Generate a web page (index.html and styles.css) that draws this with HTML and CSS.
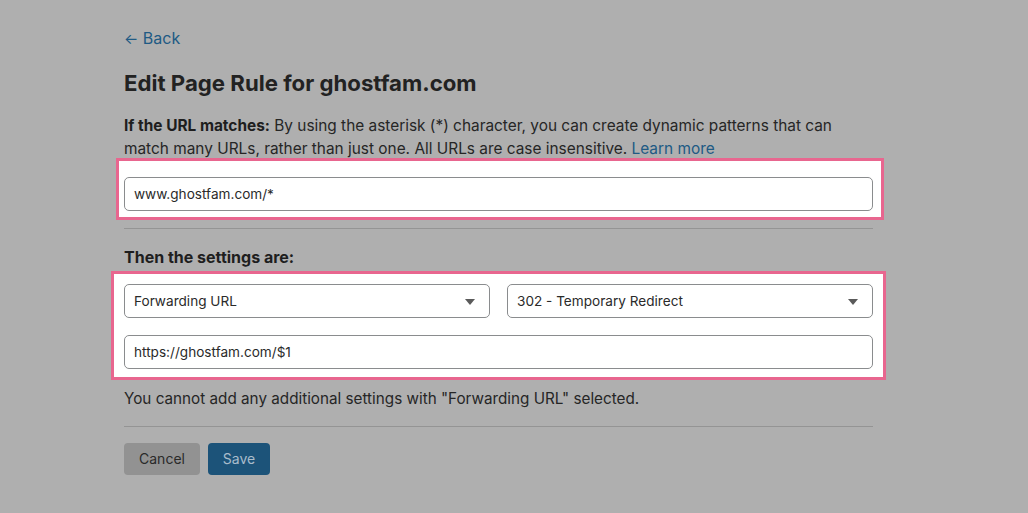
FILE: index.html
```html
<!DOCTYPE html>
<html>
<head>
<meta charset="utf-8">
<link rel="stylesheet" href="styles.css">
</head>
<body>
<main class="page">
  <a class="back" href="#"><span class="arrow">←</span> Back</a>
  <h1 class="title">Edit Page Rule for ghostfam.com</h1>
  <p class="intro"><strong>If the URL matches:</strong> By using the asterisk (*) character, you can create dynamic patterns that can match many URLs, rather than just one. All URLs are case insensitive. <a class="link" href="#">Learn more</a></p>
  <div class="hl hl-url">
    <div class="field">www.ghostfam.com/*</div>
  </div>
  <hr class="divider">
  <h2 class="subtitle">Then the settings are:</h2>
  <div class="hl hl-settings">
    <div class="row">
      <div class="field select">Forwarding URL<span class="caret"></span></div>
      <div class="field select">302 - Temporary Redirect<span class="caret"></span></div>
    </div>
    <div class="field">https://ghostfam.com/$1</div>
  </div>
  <p class="note">You cannot add any additional settings with "Forwarding URL" selected.</p>
  <hr class="divider divider-bottom">
  <div class="actions">
    <button class="btn btn-cancel">Cancel</button>
    <button class="btn btn-save">Save</button>
  </div>
</main>
</body>
</html>
```
FILE: styles.css
```css
html, body {
  margin: 0;
  padding: 0;
  background: #afafaf;
}
body {
  font-family: Inter, "Noto Sans", sans-serif;
  color: #232323;
  width: 1028px;
  height: 513px;
  overflow: hidden;
}
.page {
  width: 749px;
  margin-left: 124px;
  padding-top: 26px;
  display: flex;
  flex-direction: column;
}
.back {
  font-size: 16px;
  line-height: 24px;
  color: #205a84;
  text-decoration: none;
  align-self: flex-start;
}
.back .arrow {
  font-size: 15px;
}
.title {
  margin: 18px 0 0;
  font-size: 22.2px;
  line-height: 28px;
  font-weight: 700;
  color: #222;
}
.intro {
  margin: 17px 0 0;
  font-size: 15.4px;
  line-height: 23px;
  color: #262626;
}
.intro strong {
  font-weight: 700;
  color: #1e1e1e;
}
.link {
  color: #205a84;
  text-decoration: none;
}
.hl {
  background: #fff;
  border: 3px solid #e8668f;
  box-sizing: border-box;
}
.hl-url {
  margin: -2px -11px 0 -8px;
  padding: 16px 8px 6px 5px;
}
.field {
  height: 34px;
  box-sizing: border-box;
  border: 1px solid #8a8c8e;
  border-radius: 5px;
  background: #fff;
  font-size: 13.6px;
  line-height: 32px;
  padding: 0 9px;
  color: #2a2a2a;
  position: relative;
}
.divider {
  margin: 8px 0 0;
  border: 0;
  border-top: 1px solid #949494;
  height: 0;
}
.subtitle {
  margin: 16px 0 0;
  font-size: 16px;
  line-height: 24px;
  font-weight: 700;
  color: #1e1e1e;
}
.hl-settings {
  margin: 2px -13px 0 -13px;
  padding: 10px 10px 8px 10px;
  display: flex;
  flex-direction: column;
  gap: 17px;
}
.row {
  display: grid;
  grid-template-columns: 1fr 1fr;
  gap: 17px;
}
.select {
  padding-right: 30px;
}
.caret {
  position: absolute;
  right: 14px;
  top: 14px;
  width: 0;
  height: 0;
  border-left: 5px solid transparent;
  border-right: 5px solid transparent;
  border-top: 6px solid #5a5a5a;
}
.note {
  margin: 7px 0 0;
  font-size: 15.25px;
  line-height: 24px;
  color: #262626;
}
.divider-bottom {
  margin-top: 15px;
}
.actions {
  margin-top: 16px;
  display: flex;
  gap: 8px;
}
.btn {
  font-family: inherit;
  font-size: 14px;
  height: 32px;
  border: 0;
  border-radius: 4px;
  padding: 0;
  line-height: 32px;
}
.btn-cancel {
  background: #929292;
  color: #2a2a2a;
  width: 76px;
}
.btn-save {
  background: #1c5379;
  color: #a9bccb;
  width: 62px;
}
```
